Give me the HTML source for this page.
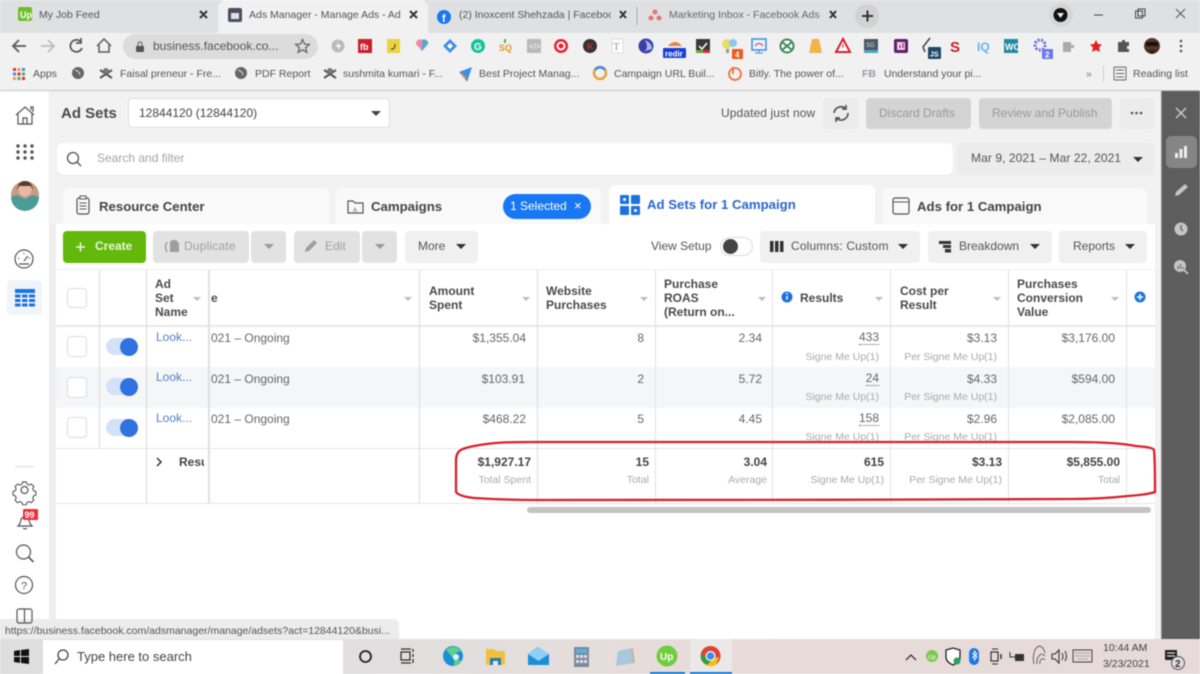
<!DOCTYPE html>
<html><head><meta charset="utf-8">
<style>
html,body{margin:0;padding:0;width:1200px;height:674px;overflow:hidden;background:#fff}
body{font-family:"Liberation Sans",sans-serif;color:#444;position:relative}
#w{position:absolute;left:0;top:0;width:1200px;height:674px;overflow:hidden;filter:blur(.45px)}
.b{position:absolute}
.t{position:absolute;white-space:nowrap;line-height:14px}
.r{position:absolute;white-space:nowrap;line-height:14px;text-align:right}
.btn{position:absolute;background:#f0f0f0;border-radius:4px}
.dis{background:#e2e2e2}
.bm{position:absolute;top:68px;font-size:10.5px;color:#555;white-space:nowrap;line-height:13px}
.h{position:absolute;font-size:12px;font-weight:bold;color:#4a4a4a;line-height:14px}
.v{font-size:12px;color:#666}
.s{font-size:10.5px;color:#aaa}
.tot{font-size:12px;font-weight:bold;color:#444}
svg{position:absolute;left:0;top:0}
</style></head><body><div id="w">
<!-- browser chrome -->
<div class="b" style="left:0;top:0;width:1200px;height:33px;background:#dfe0e2"></div>
<div class="b" style="left:218px;top:0;width:210px;height:33px;background:#f1f1f1;border-radius:8px 8px 0 0"></div>
<div class="b" style="left:0;top:33px;width:1200px;height:57px;background:#f1f1f1"></div>
<div class="b" style="left:0;top:90px;width:1200px;height:1px;background:#c4c4c4"></div>
<div class="t" style="left:39px;top:8px;font-size:10.5px;color:#555">My Job Feed</div>
<div class="t" style="left:249px;top:8px;font-size:10.5px;color:#555;width:152px;overflow:hidden">Ads Manager - Manage Ads - Ad</div>
<div class="t" style="left:459px;top:8px;font-size:10.5px;color:#555;width:152px;overflow:hidden">(2) Inoxcent Shehzada | Facebook</div>
<div class="t" style="left:669px;top:8px;font-size:10.5px;color:#666;width:151px;overflow:hidden">Marketing Inbox - Facebook Ads</div>
<div class="b" style="left:855px;top:4px;width:24px;height:24px;border-radius:12px;background:#d2d2d2"></div>
<div class="b" style="left:1049px;top:3px;width:24px;height:24px;border-radius:12px;background:#d6d6d6"></div>
<div class="b" style="left:123px;top:34px;width:195px;height:25px;border-radius:13px;background:#dcdcdc"></div>
<div class="t" style="left:153px;top:39px;font-size:12px;color:#555">business.facebook.co...</div>
<div class="bm" style="left:33px">Apps</div>
<div class="bm" style="left:120px">Faisal preneur - Fre...</div>
<div class="bm" style="left:255px">PDF Report</div>
<div class="bm" style="left:343px">sushmita kumari - F...</div>
<div class="bm" style="left:479px">Best Project Manag...</div>
<div class="bm" style="left:614px">Campaign URL Buil...</div>
<div class="bm" style="left:749px">Bitly. The power of...</div>
<div class="bm" style="left:862px;color:#99a;font-weight:bold">FB</div>
<div class="bm" style="left:884px">Understand your pi...</div>
<div class="bm" style="left:1133px">Reading list</div>
<div class="bm" style="left:1086px;color:#777">»</div>
<div class="b" style="left:1103px;top:66px;width:1px;height:16px;background:#ccc"></div>

<!-- page -->
<div class="b" style="left:0;top:91px;width:50px;height:548px;background:#fff"></div>
<div class="b" style="left:49px;top:91px;width:7px;height:548px;background:#eeeeee"></div>
<div class="b" style="left:50px;top:91px;width:1112px;height:133px;background:#f2f2f2"></div>
<div class="b" style="left:56px;top:224px;width:1099px;height:415px;background:#fff"></div>
<div class="b" style="left:1155px;top:224px;width:7px;height:415px;background:#f2f2f2"></div>
<div class="b" style="left:1161px;top:91px;width:39px;height:548px;background:#5d5d5d;border-left:1px solid #8a8a8a;box-sizing:border-box"></div>
<div class="b" style="left:1166px;top:136px;width:31px;height:32px;border-radius:5px;background:#858585"></div>

<div class="t" style="left:61px;top:106px;font-size:15px;line-height:16px;font-weight:bold;color:#4b4b4b">Ad Sets</div>
<div class="b" style="left:128px;top:98px;width:262px;height:30px;background:#fff;border:1px solid #ddd;border-radius:4px;box-sizing:border-box"></div>
<div class="t" style="left:139px;top:106px;font-size:12px;color:#444">12844120 (12844120)</div>
<div class="t" style="left:721px;top:106px;font-size:12px;letter-spacing:.1px;color:#555">Updated just now</div>
<div class="btn" style="left:823px;top:98px;width:35px;height:31px;background:#ececec"></div>
<div class="btn" style="left:866px;top:98px;width:105px;height:31px;background:#d4d4d4"></div>
<div class="t" style="left:879px;top:106px;font-size:12px;color:#999">Discard Drafts</div>
<div class="btn" style="left:979px;top:98px;width:133px;height:31px;background:#d4d4d4"></div>
<div class="t" style="left:992px;top:106px;font-size:12px;color:#999">Review and Publish</div>
<div class="btn" style="left:1120px;top:98px;width:34px;height:31px;background:#ececec"></div>

<div class="b" style="left:57px;top:143px;width:896px;height:32px;background:#fff;border-radius:6px;box-shadow:0 1px 1px #e4e4e4"></div>
<div class="t" style="left:97px;top:151px;font-size:12px;color:#a4a4a4">Search and filter</div>
<div class="btn" style="left:957px;top:143px;width:197px;height:32px;background:#ececec"></div>
<div class="t" style="left:971px;top:151px;font-size:12px;letter-spacing:.08px;color:#555">Mar 9, 2021 – Mar 22, 2021</div>

<!-- tabs -->
<div class="b" style="left:63px;top:188px;width:266px;height:36px;background:#f9f9f9;border-radius:6px 6px 0 0"></div>
<div class="b" style="left:336px;top:188px;width:265px;height:36px;background:#f9f9f9;border-radius:6px 6px 0 0"></div>
<div class="b" style="left:609px;top:185px;width:266px;height:39px;background:#fff;border-radius:6px 6px 0 0"></div>
<div class="b" style="left:882px;top:188px;width:265px;height:36px;background:#f9f9f9;border-radius:6px 6px 0 0"></div>
<div class="t" style="left:99px;top:200px;font-size:13.2px;font-weight:bold;color:#444">Resource Center</div>
<div class="t" style="left:371px;top:200px;font-size:13.2px;font-weight:bold;color:#444">Campaigns</div>
<div class="b" style="left:503px;top:194px;width:88px;height:25px;border-radius:13px;background:#1877f2"></div>
<div class="t" style="left:510px;top:199px;font-size:12px;color:#fff">1 Selected</div>
<div class="t" style="left:574px;top:199px;font-size:13px;color:#fff">×</div>
<div class="t" style="left:647px;top:198px;font-size:13.2px;font-weight:bold;color:#2c68c9">Ad Sets for 1 Campaign</div>
<div class="t" style="left:917px;top:200px;font-size:13.2px;font-weight:bold;color:#444">Ads for 1 Campaign</div>

<!-- toolbar -->
<div class="b" style="left:63px;top:231px;width:83px;height:32px;background:#63b80c;border-radius:4px"></div>
<div class="t" style="left:95px;top:239px;font-size:12px;font-weight:bold;color:#e8f7d8">Create</div>
<div class="btn dis" style="left:153px;top:231px;width:96px;height:32px"></div>
<div class="btn dis" style="left:251px;top:231px;width:35px;height:32px"></div>
<div class="t" style="left:184px;top:239px;font-size:12px;letter-spacing:.2px;color:#a0a0a0">Duplicate</div>
<div class="btn dis" style="left:294px;top:231px;width:66px;height:32px"></div>
<div class="btn dis" style="left:362px;top:231px;width:35px;height:32px"></div>
<div class="t" style="left:325px;top:239px;font-size:12px;color:#a0a0a0">Edit</div>
<div class="btn" style="left:405px;top:231px;width:73px;height:32px"></div>
<div class="t" style="left:418px;top:239px;font-size:12px;color:#555">More</div>
<div class="t" style="left:651px;top:239px;font-size:12px;color:#555">View Setup</div>
<div class="b" style="left:720px;top:237px;width:33px;height:19px;border:1px solid #ddd;border-radius:10px;box-sizing:border-box;background:#fff"></div>
<div class="b" style="left:723px;top:239px;width:15px;height:15px;border-radius:8px;background:#444"></div>
<div class="btn" style="left:760px;top:231px;width:160px;height:32px"></div>
<div class="t" style="left:791px;top:239px;font-size:12px;letter-spacing:.15px;color:#555">Columns: Custom</div>
<div class="btn" style="left:928px;top:231px;width:124px;height:32px"></div>
<div class="t" style="left:959px;top:239px;font-size:12px;color:#555">Breakdown</div>
<div class="btn" style="left:1059px;top:231px;width:88px;height:32px"></div>
<div class="t" style="left:1073px;top:239px;font-size:12px;color:#555">Reports</div>

<!-- table -->
<div class="b" style="left:56px;top:269px;width:1099px;height:1px;background:#eee"></div>
<div class="b" style="left:56px;top:325px;width:1099px;height:2px;background:#e8e8e8"></div>
<div class="b" style="left:56px;top:367px;width:1099px;height:41px;background:#f5f6f7"></div>
<div class="b" style="left:56px;top:448px;width:1099px;height:1px;background:#e6e6e6"></div>
<div class="b" style="left:56px;top:503px;width:1099px;height:1px;background:#e6e6e6"></div>
<div class="b" style="left:99px;top:270px;width:1px;height:178px;background:#dcdcdc"></div>
<div class="b" style="left:146px;top:270px;width:1px;height:233px;background:#d8d8d8"></div>
<div class="b" style="left:419px;top:270px;width:1px;height:233px;background:#dcdcdc"></div>
<div class="b" style="left:537px;top:270px;width:1px;height:233px;background:#dcdcdc"></div>
<div class="b" style="left:655px;top:270px;width:1px;height:233px;background:#e2e2e2"></div>
<div class="b" style="left:772px;top:270px;width:1px;height:233px;background:#e2e2e2"></div>
<div class="b" style="left:890px;top:270px;width:1px;height:233px;background:#e2e2e2"></div>
<div class="b" style="left:1008px;top:270px;width:1px;height:233px;background:#e2e2e2"></div>
<div class="b" style="left:1126px;top:270px;width:1px;height:233px;background:#e2e2e2"></div>
<div class="b" style="left:208px;top:270px;width:2px;height:233px;background:#e0e0e0"></div>

<div class="b" style="left:67px;top:288px;width:20px;height:20px;border:1px solid #ddd;border-radius:4px;box-sizing:border-box;background:#fff"></div>
<div class="b" style="left:67px;top:336px;width:20px;height:21px;border:1px solid #ddd;border-radius:4px;box-sizing:border-box;background:#fff"></div>
<div class="b" style="left:67px;top:377px;width:20px;height:21px;border:1px solid #ddd;border-radius:4px;box-sizing:border-box;background:#fff"></div>
<div class="b" style="left:67px;top:417px;width:20px;height:21px;border:1px solid #ddd;border-radius:4px;box-sizing:border-box;background:#fff"></div>
<div class="b" style="left:106px;top:338px;width:32px;height:17px;border-radius:9px;background:#d3e2f8"></div>
<div class="b" style="left:120px;top:338px;width:18px;height:18px;border-radius:9px;background:#2f72e0"></div>
<div class="b" style="left:106px;top:378px;width:32px;height:17px;border-radius:9px;background:#d3e2f8"></div>
<div class="b" style="left:120px;top:378px;width:18px;height:18px;border-radius:9px;background:#2f72e0"></div>
<div class="b" style="left:106px;top:419px;width:32px;height:17px;border-radius:9px;background:#d3e2f8"></div>
<div class="b" style="left:120px;top:419px;width:18px;height:18px;border-radius:9px;background:#2f72e0"></div>

<div class="h" style="left:155px;top:277px">Ad<br>Set<br>Name</div>
<div class="t" style="left:211px;top:291px;font-size:12px;font-weight:bold;color:#4a4a4a">e</div>
<div class="h" style="left:429px;top:284px">Amount<br>Spent</div>
<div class="h" style="left:546px;top:284px">Website<br>Purchases</div>
<div class="h" style="left:664px;top:277px">Purchase<br>ROAS<br>(Return on...</div>
<div class="h" style="left:800px;top:291px">Results</div>
<div class="h" style="left:900px;top:284px">Cost per<br>Result</div>
<div class="h" style="left:1017px;top:277px">Purchases<br>Conversion<br>Value</div>

<div class="t" style="left:156px;top:330px;font-size:12px;color:#4f81c7">Look...</div>
<div class="t" style="left:156px;top:370px;font-size:12px;color:#4f81c7">Look...</div>
<div class="t" style="left:156px;top:411px;font-size:12px;color:#4f81c7">Look...</div>
<div class="t v" style="left:211px;top:331px">021 – Ongoing</div>
<div class="t v" style="left:211px;top:372px">021 – Ongoing</div>
<div class="t v" style="left:211px;top:412px">021 – Ongoing</div>

<div class="r v" style="right:674px;top:331px">$1,355.04</div>
<div class="r v" style="right:675px;top:372px">$103.91</div>
<div class="r v" style="right:674px;top:412px">$468.22</div>
<div class="r v" style="right:556px;top:331px">8</div>
<div class="r v" style="right:556px;top:372px">2</div>
<div class="r v" style="right:556px;top:412px">5</div>
<div class="r v" style="right:438px;top:331px">2.34</div>
<div class="r v" style="right:438px;top:372px">5.72</div>
<div class="r v" style="right:438px;top:412px">4.45</div>
<div class="r v" style="right:321px;top:331px;border-bottom:1px dotted #666;line-height:13px">433</div>
<div class="r v" style="right:321px;top:372px;border-bottom:1px dotted #666;line-height:13px">24</div>
<div class="r v" style="right:321px;top:412px;border-bottom:1px dotted #666;line-height:13px">158</div>
<div class="r s" style="right:321px;top:350px">Signe Me Up(1)</div>
<div class="r s" style="right:321px;top:390px">Signe Me Up(1)</div>
<div class="r s" style="right:321px;top:430px">Signe Me Up(1)</div>
<div class="r v" style="right:203px;top:331px">$3.13</div>
<div class="r v" style="right:203px;top:372px">$4.33</div>
<div class="r v" style="right:203px;top:412px">$2.96</div>
<div class="r s" style="right:203px;top:350px">Per Signe Me Up(1)</div>
<div class="r s" style="right:203px;top:390px">Per Signe Me Up(1)</div>
<div class="r s" style="right:203px;top:430px">Per Signe Me Up(1)</div>
<div class="r v" style="right:85px;top:331px">$3,176.00</div>
<div class="r v" style="right:85px;top:372px">$594.00</div>
<div class="r v" style="right:85px;top:412px">$2,085.00</div>

<div class="t tot" style="left:179px;top:455px">Resu</div>
<div class="b" style="left:204px;top:450px;width:4px;height:20px;background:#fff"></div>
<div class="r tot" style="right:669px;top:455px">$1,927.17</div>
<div class="r tot" style="right:551px;top:455px">15</div>
<div class="r tot" style="right:433px;top:455px">3.04</div>
<div class="r tot" style="right:316px;top:455px">615</div>
<div class="r tot" style="right:198px;top:455px">$3.13</div>
<div class="r tot" style="right:80px;top:455px">$5,855.00</div>
<div class="r s" style="right:669px;top:473px">Total Spent</div>
<div class="r s" style="right:551px;top:473px">Total</div>
<div class="r s" style="right:433px;top:473px">Average</div>
<div class="r s" style="right:316px;top:473px">Signe Me Up(1)</div>
<div class="r s" style="right:198px;top:473px">Per Signe Me Up(1)</div>
<div class="r s" style="right:80px;top:473px">Total</div>
<div class="b" style="left:527px;top:507px;width:624px;height:6px;border-radius:3px;background:#c4c4c4"></div>

<!-- status + taskbar -->
<div class="b" style="left:0;top:619px;width:399px;height:20px;background:#ececec;border-radius:0 5px 0 0"></div>
<div class="t" style="left:5px;top:624px;font-size:10.5px;color:#555">https://business.facebook.com/adsmanager/manage/adsets?act=12844120&amp;busi...</div>
<div class="b" style="left:0;top:639px;width:1200px;height:35px;background:linear-gradient(90deg,#dedede 0,#e2dfdf 35%,#e8dcda 60%,#e6dadb 100%)"></div>
<div class="b" style="left:43px;top:640px;width:300px;height:34px;background:#fff"></div>
<div class="t" style="left:77px;top:650px;font-size:13px;color:#444">Type here to search</div>
<div class="b" style="left:690px;top:639px;width:42px;height:35px;background:#ece8e8"></div>
<div class="b" style="left:650px;top:672px;width:35px;height:2px;background:#0f78d4"></div>
<div class="b" style="left:690px;top:672px;width:42px;height:2px;background:#0f78d4"></div>
<div class="t" style="left:1103px;top:641px;font-size:10.5px;color:#444">10:44 AM</div>
<div class="t" style="left:1103px;top:657px;font-size:10.5px;color:#444">3/23/2021</div>

<svg width="1200" height="674" viewBox="0 0 1200 674" xmlns="http://www.w3.org/2000/svg" font-family="Liberation Sans">
<!-- tab icons -->
<rect x="18" y="7" width="14" height="14" rx="2" fill="#6fbe2f"/><text x="20" y="18" font-size="9" font-weight="bold" fill="#fff">Up</text>
<rect x="228" y="8" width="14" height="14" rx="2" fill="#4a4f60"/><rect x="231" y="13" width="8" height="6" fill="#dfe0e8"/>
<circle cx="444" cy="17" r="7" fill="#1877f2"/><text x="442" y="22" font-size="11" font-weight="bold" fill="#fff">f</text>
<circle cx="655" cy="12" r="2.5" fill="#e9746a"/><circle cx="651" cy="18" r="2.5" fill="#e9746a"/><circle cx="659" cy="18" r="2.5" fill="#e9746a"/>
<g stroke="#333" stroke-width="2" fill="none">
<path d="M200 11l7 7M207 11l-7 7M410 11l7 7M417 11l-7 7M620 11l6 7M626 11l-6 7M830 11l6 7M836 11l-6 7"/>
<path d="M862 16h11M867.500 10.500v11"/></g>
<path d="M637 7v18" stroke="#aaa"/>
<circle cx="1060.500" cy="15" r="7" fill="#111"/><path d="M1057 13h7l-3.500 5z" fill="#eee"/>
<path d="M1094 15h9" stroke="#444"/><rect x="1135.500" y="11" width="7" height="7" fill="none" stroke="#444"/><rect x="1138" y="9" width="7" height="7" fill="none" stroke="#444"/>
<path d="M1176 9l9 9M1185 9l-9 9" stroke="#555"/>
<!-- nav -->
<g fill="none" stroke="#5a5a5a" stroke-width="1.800">
<path d="M13 46h13M19 40l-6 6 6 6"/><path d="M41 46h13M48 40l6 6-6 6" stroke="#bdbdbd"/>
<path d="M81 42a6 6 0 1 0 1 6M81 38v5h-5"/><path d="M97 46l7-7 7 7M99 45v7h10v-7" stroke-width="1.500"/></g>
<rect x="136" y="46" width="8" height="6" rx="1" fill="#555"/><path d="M138 46v-2a2 2 0 0 1 4 0v2" stroke="#555" fill="none"/>
<path d="M302.500 39.500l2 4.500 4.800.4-3.600 3.200 1.100 4.700-4.300-2.500-4.300 2.500 1.100-4.700-3.600-3.200 4.800-.4z" fill="none" stroke="#666" stroke-width="1.300"/>
<!-- extensions -->
<circle cx="338" cy="46" r="6.500" fill="#bbb"/><path d="M339 41l-3 6h3l-1 4 3-6h-3z" fill="#fff"/>
<rect x="358" y="39" width="14" height="14" fill="#c8202c"/><text x="360" y="50" font-size="9" font-weight="bold" fill="#fff">fb</text>
<rect x="387" y="39" width="13" height="14" fill="#e8d43c"/><path d="M391 49q4 1 4-5" stroke="#333" fill="none"/>
<path d="M422 51l-6-7a4 4 0 0 1 6-4 4 4 0 0 1 6 4z" fill="#e8a"/><path d="M422 51l6-7a4 4 0 0 0-6-4z" fill="#5ac"/>
<path d="M450 39l7 7-7 7-7-7z" fill="#3d8fe8"/><path d="M447 46l3-3 3 3-3 3z" fill="#fff"/>
<circle cx="478" cy="46" r="7" fill="#15c39a"/><text x="474" y="50" font-size="10" font-weight="bold" fill="#fff">G</text>
<text x="499" y="51" font-size="9" font-weight="bold" fill="#e8932a">SQ</text><path d="M505 39v4" stroke="#5a5" stroke-width="2"/>
<rect x="527" y="39" width="14" height="14" fill="#b9b9b9"/><text x="529" y="49" font-size="8" fill="#fff">&lt;/&gt;</text>
<circle cx="561" cy="46" r="7" fill="#e4252f"/><circle cx="561" cy="46" r="3.500" fill="none" stroke="#fff" stroke-width="2"/>
<circle cx="590" cy="46" r="7" fill="#333"/><text x="587" y="50" font-size="10" fill="#d33">K</text>
<rect x="612" y="39" width="11" height="14" fill="#fdfdfd" stroke="#ddd"/><text x="613" y="50" font-size="11" font-family="Liberation Serif" fill="#999">T</text>
<circle cx="646" cy="46" r="7.500" fill="#3d3fa8"/><path d="M642 52q8-2 3-12 7 3 7 9z" fill="#a8b8ee"/>
<path d="M668 46q7-8 14 0z" fill="#e9823a"/><rect x="663" y="48" width="23" height="10" rx="1" fill="#1a3ed8"/><text x="665" y="56.500" font-size="8" font-weight="bold" fill="#fff">redir</text>
<rect x="696" y="39" width="14" height="14" fill="#3a3a3a"/><path d="M699 46l3 3 5-6" stroke="#fff" fill="none" stroke-width="1.500"/><rect x="696" y="50" width="7" height="3" fill="#6a3"/><rect x="703" y="50" width="7" height="3" fill="#c33"/>
<circle cx="727" cy="44" r="5" fill="#e6dd6a"/><circle cx="733" cy="43" r="4" fill="#8cc8e8"/><rect x="726" y="49" width="3" height="4" fill="#999"/>
<rect x="732" y="49" width="11" height="10" rx="1" fill="#ec5a1c"/><text x="735" y="57.500" font-size="8" font-weight="bold" fill="#fff">4</text>
<rect x="752" y="39" width="14" height="11" fill="#e8f0fa" stroke="#3d8fe8" stroke-width="1.500"/><path d="M759 50v3M755 53h8" stroke="#3d8fe8"/><path d="M755 46q4-5 8 0" stroke="#d33" fill="none"/>
<circle cx="787" cy="46" r="6.500" fill="#fff" stroke="#3c8a5a" stroke-width="2"/><path d="M782 42l10 8M792 42l-10 8" stroke="#3c8a5a" stroke-width="2"/>
<path d="M812 39h7l3 14h-13z" fill="#f2b447"/>
<path d="M843 39l7 13h-14z" fill="#fff" stroke="#d8202c" stroke-width="2"/><path d="M843 44v4" stroke="#d8202c"/>
<rect x="864" y="39" width="14" height="14" fill="#4a5a68"/><rect x="864" y="50" width="14" height="3" fill="#4ea5c0"/><text x="866" y="47" font-size="6" fill="#ddd">SG</text>
<rect x="894" y="39" width="14" height="14" rx="2" fill="#5e1f6e"/><rect x="897" y="42" width="8" height="8" fill="#ecd" /><path d="M900 48v-3M903 48v-5" stroke="#5e1f6e"/>
<path d="M930 38l-7 9 2 5" stroke="#345" stroke-width="1.500" fill="none"/><rect x="928" y="47" width="13" height="12" rx="1" fill="#1d4a68"/><text x="930" y="56.500" font-size="7" font-weight="bold" fill="#fff">JS</text>
<text x="950" y="52" font-size="15" font-weight="bold" fill="#c8202c">S</text>
<text x="977" y="51" font-size="12" font-weight="bold" fill="#6ab4e8">IQ</text>
<rect x="1004" y="39" width="14" height="14" fill="#1f8aa0"/><text x="1005" y="50" font-size="9" font-weight="bold" fill="#fff">WC</text>
<circle cx="1040" cy="45" r="5" fill="none" stroke="#6a66e0" stroke-width="3" stroke-dasharray="2 1.500"/><rect x="1042" y="49" width="11" height="10" rx="1" fill="#6a78ee"/><text x="1045" y="57.500" font-size="8" font-weight="bold" fill="#fff">2</text>
<path d="M1063 42h8v3h3v3h-3v4h-8z" fill="#aaa"/>
<path d="M1096 40l2 4 4 .5-3 3 1 4.500-4-2-4 2 1-4.500-3-3 4-.5z" fill="#e51c23"/>
<path d="M1118 42h4v-2h3v2h4v4h-2v3h2v3h-11z" fill="#555"/>
<circle cx="1152" cy="46" r="8" fill="#5a3520"/><rect x="1146" y="42" width="12" height="4" fill="#111"/><path d="M1147 50h10l-5 4z" fill="#222"/>
<circle cx="1181" cy="41" r="1.300" fill="#555"/><circle cx="1181" cy="46" r="1.300" fill="#555"/><circle cx="1181" cy="51" r="1.300" fill="#555"/>
<!-- bookmarks -->
<g fill="#d33"><rect x="13" y="68" width="3" height="3"/></g><rect x="17.500" y="68" width="3" height="3" fill="#e8a33a"/><rect x="22" y="68" width="3" height="3" fill="#3d8fe8"/><rect x="13" y="72.500" width="3" height="3" fill="#3d8fe8"/><rect x="17.500" y="72.500" width="3" height="3" fill="#d33"/><rect x="22" y="72.500" width="3" height="3" fill="#5a5"/><rect x="13" y="77" width="3" height="3" fill="#e8a33a"/><rect x="17.500" y="77" width="3" height="3" fill="#5a5"/><rect x="22" y="77" width="3" height="3" fill="#d33"/>
<circle cx="78" cy="73" r="6" fill="#666"/><circle cx="241" cy="73" r="6" fill="#666"/><path d="M75 70q4 1 5 5M238 70q4 1 5 5" stroke="#ddd" fill="none"/>
<g stroke="#555" stroke-width="2" fill="none"><path d="M100 70l12 8M112 70l-12 8"/><path d="M324 70l12 8M336 70l-12 8"/></g>
<circle cx="106" cy="71" r="3" fill="#777"/><circle cx="330" cy="71" r="3" fill="#777"/>
<path d="M459 72l13-5-5 15-2-6z" fill="#3d8fe8"/><path d="M459 72l6 4 2 6z" fill="#e8932a"/>
<circle cx="600" cy="73" r="6" fill="none" stroke="#e8a33a" stroke-width="2.500"/><path d="M595 70a6 6 0 0 1 10 0" stroke="#3d8fe8" stroke-width="2.500" fill="none"/>
<circle cx="735" cy="74" r="6" fill="none" stroke="#e8763a" stroke-width="1.800"/><path d="M733 67v7" stroke="#e8763a" stroke-width="1.800"/>
<rect x="1114" y="67" width="12" height="13" rx="1" fill="none" stroke="#666"/><path d="M1116 70h8M1116 73.500h8M1116 77h8" stroke="#666"/>
<!-- sidebar -->
<g fill="none" stroke="#555" stroke-width="1.200">
<path d="M16 115l9-8 9 8M18 114v10h14v-10M23 124v-6h4v6M31 110v-3h2v5"/>
<circle cx="24" cy="259" r="9"/><path d="M24 261l4-5M18 258l1 .5M24 253v1M30 258l-1 .5M19 264h10"/>
<circle cx="24.500" cy="490" r="3.500"/><path d="M22.500 481h4l.8 2.500 2.400 1 2.400-1.200 2.800 2.800-1.200 2.400 1 2.400 2.500.8v4l-2.500.8-1 2.400 1.200 2.400-2.800 2.800-2.400-1.200-2.400 1-.8 2.500h-4l-.8-2.500-2.400-1-2.400 1.200-2.800-2.800 1.200-2.400-1-2.400-2.500-.8v-4l2.500-.8 1-2.400-1.200-2.400 2.800-2.800 2.400 1.200 2.400-1z" transform="translate(2.400 49) scale(.9)"/>
<path d="M18 526q3-3 3-7a5 5 0 0 1 8 0q0 4 3 7zM23 528q2 2 4 0"/>
<circle cx="23.500" cy="552" r="7"/><path d="M28.500 557l5 5" stroke-width="1.600"/>
<circle cx="24" cy="585" r="8.500"/>
<rect x="17" y="609" width="15" height="14" rx="2"/><path d="M24.500 609v14"/></g>
<text x="21" y="589.500" font-size="11" fill="#555">?</text>
<rect x="23" y="509" width="15" height="11" rx="1" fill="#e8303a"/><text x="24.500" y="518" font-size="9" font-weight="bold" fill="#fff">99</text>
<g fill="#555"><circle cx="18" cy="146" r="1.700"/><circle cx="25" cy="146" r="1.700"/><circle cx="32" cy="146" r="1.700"/><circle cx="18" cy="152" r="1.700"/><circle cx="25" cy="152" r="1.700"/><circle cx="32" cy="152" r="1.700"/><circle cx="18" cy="158" r="1.700"/><circle cx="25" cy="158" r="1.700"/><circle cx="32" cy="158" r="1.700"/></g>
<circle cx="25" cy="195" r="14" fill="#c99a84"/><path d="M11 197a14 14 0 0 0 28 0l-6-2-8 4-8-4z" fill="#4a9c96"/><circle cx="25" cy="190" r="6.500" fill="#e6b9a4"/><path d="M17 190q1-9 8-9t8 9l-2-4h-12z" fill="#5b3a2c"/>
<rect x="7" y="280" width="35" height="35" rx="4" fill="#f0f5fc"/>
<rect x="15" y="289" width="20" height="4" fill="#1d72e0"/><g fill="#1d72e0"><rect x="15" y="294.500" width="5.500" height="3"/><rect x="22" y="294.500" width="5.500" height="3"/><rect x="29" y="294.500" width="6" height="3"/><rect x="15" y="299" width="5.500" height="3"/><rect x="22" y="299" width="5.500" height="3"/><rect x="29" y="299" width="6" height="3"/><rect x="15" y="303.500" width="5.500" height="3"/><rect x="22" y="303.500" width="5.500" height="3"/><rect x="29" y="303.500" width="6" height="3"/></g>
<path d="M15 466.500h20" stroke="#ddd"/>
<!-- top controls -->
<path d="M371 111h10l-5 5z" fill="#444"/>
<g fill="none" stroke="#555" stroke-width="1.700"><path d="M834 113a7 7 0 0 1 12-4M848 113a7 7 0 0 1-12 5M846 105v4h-4M836 122v-4h4"/></g>
<g fill="#555"><circle cx="1132" cy="113" r="1.300"/><circle cx="1136.500" cy="113" r="1.300"/><circle cx="1141" cy="113" r="1.300"/></g>
<circle cx="73" cy="158" r="5.500" fill="none" stroke="#555" stroke-width="1.300"/><path d="M77 162l4 4" stroke="#555" stroke-width="1.300"/>
<path d="M1133 157h10l-5 5z" fill="#333"/>
<!-- tab icons page -->
<rect x="77" y="198" width="12" height="16" rx="2" fill="none" stroke="#555" stroke-width="1.200"/><rect x="80" y="196" width="6" height="3" fill="#fff" stroke="#555"/><path d="M79.500 203h7M79.500 206h7M79.500 209h7" stroke="#555"/>
<path d="M348 201h5l2 2h8v10h-15z" fill="none" stroke="#555" stroke-width="1.200"/><text x="353" y="212" font-size="6" fill="#555">A</text>
<g fill="#1d72e0"><rect x="620" y="195" width="9" height="9" rx="1"/><rect x="631" y="195" width="9" height="9" rx="1"/><rect x="620" y="206" width="9" height="9" rx="1"/><rect x="631" y="206" width="9" height="9" rx="1"/></g>
<circle cx="624.500" cy="199.500" r="1.500" fill="#fff"/><circle cx="635.500" cy="210.500" r="1.500" fill="#fff"/>
<rect x="893" y="198" width="16" height="16" rx="2" fill="none" stroke="#555" stroke-width="1.200"/><path d="M893 202h16" stroke="#555"/>
<!-- toolbar icons -->
<path d="M76 247h9M80.500 242.500v9" stroke="#e8f7d8" stroke-width="1.600"/>
<path d="M172 240h4l3 3v9h-9v-10z" fill="#9e9e9e"/><path d="M167 242q-3 5 0 10" stroke="#9e9e9e" fill="none" stroke-width="1.500"/>
<path d="M264 244h10l-5 5zM375 244h10l-5 5z" fill="#9a9a9a"/>
<path d="M305 252l1-4 8-8 3 3-8 8z" fill="#9e9e9e"/>
<path d="M456 244h10l-5 5zM898 244h10l-5 5zM1030 244h10l-5 5zM1125 244h10l-5 5z" fill="#333"/>
<g fill="#333"><rect x="770" y="241" width="3.500" height="11"/><rect x="775" y="241" width="3.500" height="11"/><rect x="780" y="241" width="3.500" height="11"/>
<rect x="939" y="241" width="12" height="3"/><rect x="943" y="245" width="8" height="3"/><rect x="945" y="249" width="6" height="3.500"/></g>
<!-- sort carets -->
<path d="M193 297h8l-4 4zM404 297h8l-4 4zM522 297h8l-4 4zM640 297h8l-4 4zM758 297h8l-4 4zM875 297h8l-4 4zM993 297h8l-4 4zM1111 297h8l-4 4z" fill="#bdbdbd"/>
<circle cx="787" cy="297" r="5.500" fill="#1d72e0"/><path d="M787 296v3.500" stroke="#fff" stroke-width="1.500"/><circle cx="787" cy="293.800" r=".9" fill="#fff"/>
<circle cx="1140" cy="297" r="5.500" fill="#1d72e0"/><path d="M1137 297h6M1140 294v6" stroke="#fff" stroke-width="1.500"/>
<path d="M157 458l4 4-4 4" stroke="#333" stroke-width="1.500" fill="none"/>
<!-- red ellipse -->
<path d="M456 462C456 452 458 449 474 446C495 442 510 442 536 442L1071 442C1110 442 1125 444 1136 446C1148 447 1153 448 1154 450C1155 460 1155 480 1155 492C1150 494 1140 495 1128 496C1110 498 1090 499 1071 499C900 500 700 500 536 500C510 500 490 499 474 498C465 497 458 495 456 492C456 480 456 470 456 462Z" fill="none" stroke="#d8202c" stroke-width="2.300"/>
<!-- right rail -->
<g stroke="#c8c8c8" fill="none" stroke-width="1.500"><path d="M1176 108l10 10M1186 108l-10 10"/></g>
<g fill="#eee"><rect x="1175" y="153" width="3" height="5"/><rect x="1179.500" y="149" width="3" height="9"/><rect x="1184" y="146" width="3" height="12"/></g>
<path d="M1175 196l1-4 9-8 3 3-9 8z" fill="#c4c4c4"/>
<circle cx="1181" cy="229" r="6.500" fill="#c4c4c4"/><path d="M1181 225v4l2 2" stroke="#5d5d5d" fill="none" stroke-width="1.200"/>
<circle cx="1180" cy="266" r="6" fill="#c4c4c4"/><path d="M1184 270l4 4" stroke="#c4c4c4" stroke-width="1.800"/><path d="M1178 269v-3M1180.500 269v-5M1183 269v-2" stroke="#5d5d5d"/>
<!-- taskbar -->
<g fill="#111"><path d="M14 651l6-1v6h-6zM21 650l8-1v7h-8zM14 657h6v6l-6-1zM21 657h8v7l-8-1z"/></g>
<circle cx="63" cy="655" r="5" fill="none" stroke="#444" stroke-width="1.300"/><path d="M59 659l-4 5" stroke="#444" stroke-width="1.300"/>
<circle cx="365.500" cy="656.500" r="5.500" fill="none" stroke="#222" stroke-width="1.800"/>
<g fill="none" stroke="#333" stroke-width="1.300"><rect x="401" y="652" width="9" height="8"/><path d="M401 649h10M401 663h10M413 649v3M413 654v3M413 659v4"/></g>
<circle cx="453" cy="656" r="10" fill="#1a8fd8"/><path d="M446 650a10 10 0 0 1 16 2q-2-2-6 1-3 3 0 6 3 2 6 1a10 10 0 0 1-9 6q3-4-1-9-3-4-6-7z" fill="#5cd08a"/><circle cx="456" cy="657" r="3" fill="#e8eef0"/>
<path d="M486 649h8l2 2h9v14h-19z" fill="#f0c23c"/><rect x="490" y="658" width="11" height="7" fill="#2a7ab8"/><rect x="493" y="661" width="5" height="4" fill="#f0e8d8"/>
<path d="M528 654l10-7 11 7v11h-21z" fill="#1a8fd8"/><path d="M528 654l10.500 7 10.500-7-10.500-7z" fill="#8ed0f4"/>
<rect x="574" y="647" width="15" height="20" fill="#7a8a98"/><rect x="576" y="649" width="11" height="4" fill="#5ab0e0"/><g fill="#dde"><rect x="576" y="655" width="3" height="3"/><rect x="580" y="655" width="3" height="3"/><rect x="584" y="655" width="3" height="3"/><rect x="576" y="660" width="3" height="3"/><rect x="580" y="660" width="3" height="3"/><rect x="584" y="660" width="3" height="3"/></g>
<path d="M618 651l14-3 2 15-18 3z" fill="#a8c8dc"/><path d="M632 648l2 15" stroke="#c8b890" stroke-width="2"/>
<circle cx="667" cy="656" r="10.500" fill="#6fce3a"/><text x="660" y="660" font-size="10" font-weight="bold" fill="#fff">Up</text>
<circle cx="710.500" cy="656" r="10" fill="#db4437"/><path d="M702 661a10 10 0 0 0 14 4l3-8z" fill="#f4c20d"/><path d="M701 654a10 10 0 0 0 6 11l5-5z" fill="#2f9e44"/><circle cx="710.500" cy="656" r="5" fill="#fff"/><circle cx="710.500" cy="656" r="3.800" fill="#4285f4"/>
<path d="M906 660l5-5 5 5" stroke="#333" stroke-width="1.300" fill="none"/>
<circle cx="932" cy="656" r="6" fill="#7bc74d"/><text x="928" y="659" font-size="6" fill="#fff">Up</text>
<path d="M946 650l7-2 7 2v7q0 5-7 8-7-3-7-8z" fill="#fff" stroke="#222" stroke-width="1.300"/><circle cx="957" cy="661" r="3.500" fill="#2e9e5b"/>
<rect x="969" y="648" width="10" height="17" rx="5" fill="#1e78e0"/><path d="M972 653l5 4-2.500 3v-9l2.500 3-5 4" stroke="#fff" fill="none" stroke-width=".9"/>
<rect x="991" y="652" width="7" height="9" fill="none" stroke="#333" stroke-width="1.200"/><path d="M992 649h6M992 664h6" stroke="#333"/><path d="M1001 654v5" stroke="#333" stroke-width="1.500"/>
<rect x="1015" y="654" width="9" height="7" fill="#333"/><path d="M1010 652v5h5" stroke="#333" fill="none"/>
<path d="M1034 664a6 12 0 0 1 11-11M1037 664a5 8 0 0 1 8-8M1040 664a3 4 0 0 1 5-4" fill="none" stroke="#666"/>
<path d="M1052 654h3l4-4v13l-4-4h-3z" fill="none" stroke="#333" stroke-width="1.100"/><path d="M1062 653q2 3.500 0 7M1065 651q3 5.500 0 10" stroke="#333" fill="none"/>
<rect x="1073" y="650" width="19" height="12" fill="none" stroke="#444"/><path d="M1075 653h15M1075 656h15M1078 659h9" stroke="#777" stroke-dasharray="1 1"/>
<rect x="1165" y="650" width="12" height="10" fill="#222"/><path d="M1167 653h8M1167 656h8" stroke="#fff"/>
<circle cx="1178" cy="663" r="6.500" fill="#ddd" stroke="#555"/><text x="1175" y="667" font-size="10" font-weight="bold" fill="#333">2</text>
</svg>
</div></body></html>
